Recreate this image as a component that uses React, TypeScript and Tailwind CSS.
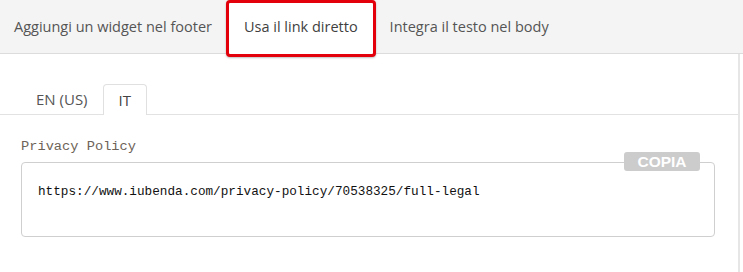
const TABS = ["Aggiungi un widget nel footer", "Usa il link diretto", "Integra il testo nel body"];

function TopTabs({ active }: { active: number }) {
  return (
    <div className="flex h-[54px] w-full items-start border-b border-[#dcdcdc] bg-[#f4f4f4]">
      {TABS.map((t, i) =>
        i === active ? (
          <div
            key={t}
            className="relative z-10 flex h-[57px] items-center rounded-[4px] border-[3px] border-[#e3000b] bg-white px-[15px] pb-[3px] text-[#3f3f3f] shadow-[0_1px_2px_rgba(0,0,0,0.25)]"
          >
            {t}
          </div>
        ) : (
          <div key={t} className="flex h-[53px] items-center px-[14px] pt-[1px] text-[#555]">
            {t}
          </div>
        )
      )}
    </div>
  );
}

function LangTabs() {
  return (
    <div className="flex h-[61px] items-end border-b border-[#e2e2e2] pl-[21px] text-[15px]">
      <div className="flex h-[30px] items-center px-[15px] text-[#555]">EN (US)</div>
      <div className="-mb-px flex h-[31px] items-center rounded-t-[4px] border border-b-0 border-[#e0e0e0] bg-white px-[15px] text-[#444]">
        IT
      </div>
    </div>
  );
}

export default function App() {
  return (
    <div className="h-[272px] w-[743px] overflow-hidden bg-white text-[14.5px] font-['Open_Sans',sans-serif]">
      <TopTabs active={1} />
      <div className="h-[218px] w-[740px] border-r-2 border-[#e6e6e6]">
        <LangTabs />
        <div className="pl-[21px] pr-[23px] pt-[23px]">
          <div className="font-['Liberation_Mono',monospace] text-[13.7px] leading-[18px] text-[#6e6358]">
            Privacy Policy
          </div>
          <div className="relative mt-[6px] h-[75px] rounded-[4px] border border-[#cfcfcf] px-[16px] pt-[20px]">
            <span className="absolute right-[14px] top-[-11px] flex h-[19px] w-[76px] items-center justify-center rounded-[3px] bg-[#cccccc] font-['Liberation_Sans',sans-serif] text-[15.5px] font-bold text-white">
              COPIA
            </span>
            <div className="font-['Liberation_Mono',monospace] text-[12.7px] leading-[18px] text-[#111]">
              https://www.iubenda.com/privacy-policy/70538325/full-legal
            </div>
          </div>
        </div>
      </div>
    </div>
  );
}
